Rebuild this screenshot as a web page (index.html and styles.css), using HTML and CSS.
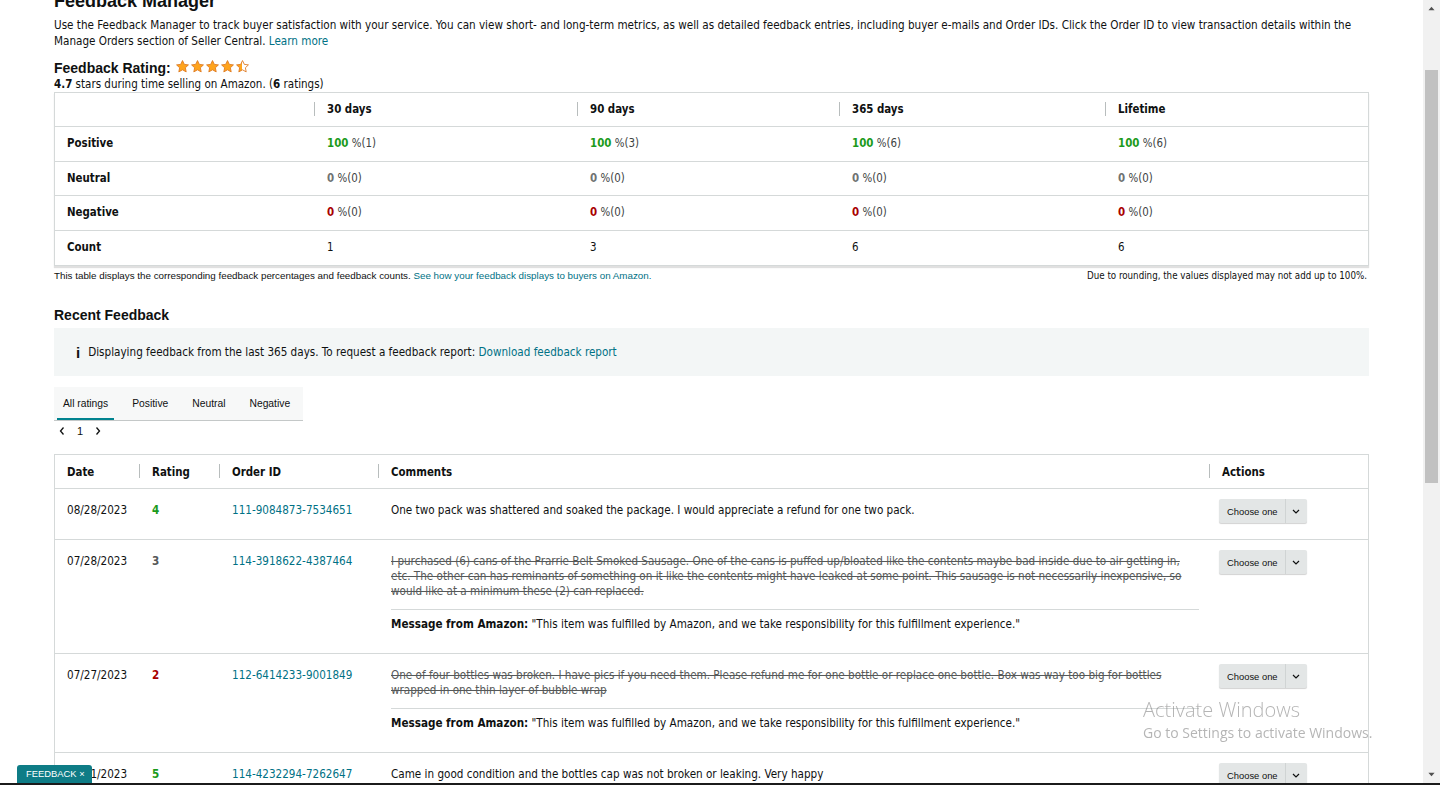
FILE: index.html
```html
<!DOCTYPE html>
<html lang="en">
<head>
<meta charset="utf-8">
<title>Feedback Manager</title>
<link rel="stylesheet" href="styles.css">
</head>
<body>
<div class="screen">
  <div class="viewport">
    <main class="page">
      <h1 class="title">Feedback Manager</h1>
      <p class="intro">Use the Feedback Manager to track buyer satisfaction with your service. You can view short- and long-term metrics, as well as detailed feedback entries, including buyer e-mails and Order IDs. Click the Order ID to view transaction details within the Manage Orders section of Seller Central. <a class="link" href="#">Learn more</a></p>

      <div class="rating-head">
        <h2 class="h2">Feedback Rating:</h2>
        <div class="stars">
          <svg class="star" viewBox="0 0 24 24"><path d="M12 2.5l2.9 6.1 6.6.8-4.9 4.6 1.3 6.6L12 17.3l-5.9 3.3 1.3-6.6-4.9-4.6 6.6-.8z"/></svg>
          <svg class="star" viewBox="0 0 24 24"><path d="M12 2.5l2.9 6.1 6.6.8-4.9 4.6 1.3 6.6L12 17.3l-5.9 3.3 1.3-6.6-4.9-4.6 6.6-.8z"/></svg>
          <svg class="star" viewBox="0 0 24 24"><path d="M12 2.5l2.9 6.1 6.6.8-4.9 4.6 1.3 6.6L12 17.3l-5.9 3.3 1.3-6.6-4.9-4.6 6.6-.8z"/></svg>
          <svg class="star" viewBox="0 0 24 24"><path d="M12 2.5l2.9 6.1 6.6.8-4.9 4.6 1.3 6.6L12 17.3l-5.9 3.3 1.3-6.6-4.9-4.6 6.6-.8z"/></svg>
          <svg class="star half" viewBox="0 0 24 24"><defs><linearGradient id="hg" x1="0" x2="1" y1="0" y2="0"><stop offset="0.5" stop-color="#ffa41c"/><stop offset="0.5" stop-color="#ffffff"/></linearGradient></defs><path fill="url(#hg)" d="M12 2.5l2.9 6.1 6.6.8-4.9 4.6 1.3 6.6L12 17.3l-5.9 3.3 1.3-6.6-4.9-4.6 6.6-.8z"/></svg>
        </div>
      </div>
      <p class="rating-sub"><b>4.7</b> stars during time selling on Amazon. (<b>6</b> ratings)</p>

      <div class="stats">
        <div class="sh"></div>
        <div class="sh sep">30 days</div>
        <div class="sh sep">90 days</div>
        <div class="sh sep">365 days</div>
        <div class="sh sep">Lifetime</div>

        <div class="sc lbl">Positive</div>
        <div class="sc"><b class="pos">100</b> <span class="pct">%(1)</span></div>
        <div class="sc"><b class="pos">100</b> <span class="pct">%(3)</span></div>
        <div class="sc"><b class="pos">100</b> <span class="pct">%(6)</span></div>
        <div class="sc"><b class="pos">100</b> <span class="pct">%(6)</span></div>

        <div class="sc lbl">Neutral</div>
        <div class="sc"><b class="neu">0</b> <span class="pct">%(0)</span></div>
        <div class="sc"><b class="neu">0</b> <span class="pct">%(0)</span></div>
        <div class="sc"><b class="neu">0</b> <span class="pct">%(0)</span></div>
        <div class="sc"><b class="neu">0</b> <span class="pct">%(0)</span></div>

        <div class="sc lbl">Negative</div>
        <div class="sc"><b class="neg">0</b> <span class="pct">%(0)</span></div>
        <div class="sc"><b class="neg">0</b> <span class="pct">%(0)</span></div>
        <div class="sc"><b class="neg">0</b> <span class="pct">%(0)</span></div>
        <div class="sc"><b class="neg">0</b> <span class="pct">%(0)</span></div>

        <div class="sc lbl last">Count</div>
        <div class="sc last">1</div>
        <div class="sc last">3</div>
        <div class="sc last">6</div>
        <div class="sc last">6</div>
      </div>
      <div class="stats-foot">
        <span>This table displays the corresponding feedback percentages and feedback counts. <a class="link" href="#">See how your feedback displays to buyers on Amazon.</a></span>
        <span class="round">Due to rounding, the values displayed may not add up to 100%.</span>
      </div>

      <h2 class="h2 recent">Recent Feedback</h2>
      <div class="info">
        <span class="info-i">i</span>
        <span>Displaying feedback from the last 365 days. To request a feedback report: <a class="link" href="#">Download feedback report</a></span>
      </div>

      <div class="tabs">
        <span class="tab active">All ratings</span>
        <span class="tab">Positive</span>
        <span class="tab">Neutral</span>
        <span class="tab">Negative</span>
      </div>
      <div class="pager">
        <svg class="chev" viewBox="0 0 8 10"><path d="M5.5 1.5L2.5 5l3 3.5"/></svg>
        <span class="pnum">1</span>
        <svg class="chev" viewBox="0 0 8 10"><path d="M2.5 1.5L5.5 5l-3 3.5"/></svg>
      </div>

      <div class="fb">
        <div class="fb-row fb-head">
          <div class="fh">Date</div>
          <div class="fh sep">Rating</div>
          <div class="fh sep">Order ID</div>
          <div class="fh sep">Comments</div>
          <div class="fh sep">Actions</div>
        </div>

        <div class="fb-row">
          <div class="fc">08/28/2023</div>
          <div class="fc"><b class="pos">4</b></div>
          <div class="fc"><a class="link" href="#">111-9084873-7534651</a></div>
          <div class="fc comment">One two pack was shattered and soaked the package. I would appreciate a refund for one two pack.</div>
          <div class="fc act"><div class="select"><span class="select-label">Choose one</span><span class="select-caret"><svg viewBox="0 0 8 5"><path d="M1 1l3 3 3-3"/></svg></span></div></div>
        </div>

        <div class="fb-row">
          <div class="fc">07/28/2023</div>
          <div class="fc"><b class="mid">3</b></div>
          <div class="fc"><a class="link" href="#">114-3918622-4387464</a></div>
          <div class="fc comment">
            <p class="struck">I purchased (6) cans of the Prarrie Belt Smoked Sausage. One of the cans is puffed up/bloated like the contents maybe bad inside due to air getting in, etc. The other can has reminants of something on it like the contents might have leaked at some point. This sausage is not necessarily inexpensive, so would like at a minimum these (2) can replaced.</p>
            <p class="reply"><b>Message from Amazon:</b> "This item was fulfilled by Amazon, and we take responsibility for this fulfillment experience."</p>
          </div>
          <div class="fc act"><div class="select"><span class="select-label">Choose one</span><span class="select-caret"><svg viewBox="0 0 8 5"><path d="M1 1l3 3 3-3"/></svg></span></div></div>
        </div>

        <div class="fb-row">
          <div class="fc">07/27/2023</div>
          <div class="fc"><b class="neg">2</b></div>
          <div class="fc"><a class="link" href="#">112-6414233-9001849</a></div>
          <div class="fc comment">
            <p class="struck">One of four bottles was broken. I have pics if you need them. Please refund me for one bottle or replace one bottle. Box was way too big for bottles wrapped in one thin layer of bubble wrap</p>
            <p class="reply"><b>Message from Amazon:</b> "This item was fulfilled by Amazon, and we take responsibility for this fulfillment experience."</p>
          </div>
          <div class="fc act"><div class="select"><span class="select-label">Choose one</span><span class="select-caret"><svg viewBox="0 0 8 5"><path d="M1 1l3 3 3-3"/></svg></span></div></div>
        </div>

        <div class="fb-row">
          <div class="fc">07/21/2023</div>
          <div class="fc"><b class="pos">5</b></div>
          <div class="fc"><a class="link" href="#">114-4232294-7262647</a></div>
          <div class="fc comment">Came in good condition and the bottles cap was not broken or leaking. Very happy</div>
          <div class="fc act"><div class="select"><span class="select-label">Choose one</span><span class="select-caret"><svg viewBox="0 0 8 5"><path d="M1 1l3 3 3-3"/></svg></span></div></div>
        </div>
      </div>
    </main>

    <div class="scrollbar">
      <div class="sb-btn"><svg viewBox="0 0 8 5"><path d="M4 0.5L7.5 4.5H0.5z"/></svg></div>
      <div class="sb-track"><div class="sb-thumb"></div></div>
      <div class="sb-btn"><svg viewBox="0 0 8 5"><path d="M4 4.5L7.5 0.5H0.5z"/></svg></div>
    </div>
  </div>
  <div class="taskbar-edge"></div>
</div>

<div class="feedback-tab">FEEDBACK ×</div>
<div class="activate">
  <div class="act-1">Activate Windows</div>
  <div class="act-2">Go to Settings to activate Windows.</div>
</div>
</body>
</html>
```

FILE: styles.css
```css
* { box-sizing: border-box; }
html, body { margin: 0; padding: 0; }
body {
  font-family: "DejaVu Sans Condensed", "DejaVu Sans", sans-serif;
  font-size: 11.6px;
  color: #0f1111;
  background: #fff;
  overflow: hidden;
}
.screen { display: flex; flex-direction: column; height: 785px; width: 1440px; }
.viewport { flex: 1; display: flex; overflow: hidden; min-height: 0; }
.taskbar-edge { height: 2px; background: #1b1b1b; }

.page { flex: 1; padding-left: 54px; overflow: hidden; }
.page > * { width: 1315px; }

.link { color: #007185; text-decoration: none; }

.title {
  font-family: "Liberation Sans", Arial, sans-serif;
  font-size: 18px; font-weight: bold; line-height: 22px;
  margin: -10px 0 0; color: #0f1111;
}
.intro { margin: 5px 0 0; line-height: 16px; color: #0f1111; }

.rating-head { display: flex; align-items: center; gap: 4px; margin-top: 10px; height: 18px; }
.h2 {
  font-family: "Liberation Sans", Arial, sans-serif;
  font-size: 14px; font-weight: bold; line-height: 18px; margin: 0; color: #0f1111;
}
.stars { display: flex; gap: 0; margin-top: -3px; }
.star { width: 15px; height: 15px; fill: #ffa41c; stroke: #de7921; stroke-width: 1.4; stroke-linejoin: round; }
.rating-sub { margin: 0; line-height: 14px; font-size: 11.5px; }

.stats {
  margin-top: 1px;
  display: grid;
  grid-template-columns: 259px 263px 262px 266px 1fr;
  border: 1px solid #d5d9d9;
  box-shadow: 0 2px 1px rgba(0,0,0,0.12);
  color: #0f1111;
}
.sh, .sc {
  height: 34.5px; line-height: 33.5px; white-space: nowrap;
  border-bottom: 1px solid #d5d9d9; padding-left: 12px; font-size: 11.4px;
}
.sh { height: 34px; font-weight: bold; position: relative; line-height: 32px; }
.sh.sep { padding-left: 13px; }
.sh.sep::before, .fh.sep::before {
  content: ""; position: absolute; left: 0; top: 9px; height: 14px; width: 1px; background: #b8bdbd;
}
.sc.last { border-bottom: none; }
.lbl { font-weight: bold; }
.sc:not(.lbl) { padding-left: 13px; }
.pos { color: #1b9a1b; }
.neu { color: #6f7373; }
.neg { color: #a80000; }
.mid { color: #565959; }
.pct { color: #3d4242; }

.stats-foot {
  display: flex; justify-content: space-between; margin-top: 4px;
  font-family: "Liberation Sans", Arial, sans-serif; font-size: 9.8px; line-height: 12px; color: #0f1111;
}
.stats-foot .round { font-family: "DejaVu Sans Condensed", "DejaVu Sans", sans-serif; font-size: 9.7px; padding-right: 2px; }

.recent { margin-top: 24px; }
.info {
  margin-top: 4px; height: 48px; background: #f3f6f6;
  display: flex; align-items: center; padding-left: 22px; gap: 8px; font-size: 11.6px;
}
.info-i { font-family: "Liberation Sans", Arial, sans-serif; font-weight: bold; font-size: 15px; color: #0f1111; }

.tabs {
  margin-top: 11px; width: 249px !important; height: 34px; background: #f7f8f8;
  border-bottom: 1px solid #c4c8c8; display: flex; align-items: stretch; padding-left: 3px;
  font-family: "Liberation Sans", Arial, sans-serif; font-size: 10.3px; white-space: nowrap;
}
.tab { display: flex; align-items: center; padding: 2px 6px 0; margin-right: 12px; color: #0f1111; border-bottom: 2px solid transparent; flex: none; }
.tab:last-child { margin-right: 0; }
.tab.active { border-bottom-color: #00838f; }
.pager { display: flex; align-items: center; gap: 8px; height: 17px; margin-top: 1px; padding-left: 4px; font-family: "Liberation Sans", Arial, sans-serif; font-size: 11px; }
.chev { width: 8px; height: 10px; fill: none; stroke: #0f1111; stroke-width: 1.3; }
.pnum { padding: 0 3px; }

.fb { margin-top: 15px; border: 1px solid #d5d9d9; border-bottom: none; }
.fb-row { display: grid; grid-template-columns: 84px 80px 159px 831px 1fr; border-bottom: 1px solid #d5d9d9; }
.fh { position: relative; height: 33px; display: flex; align-items: center; padding-left: 12px; font-weight: bold; font-size: 11.4px; }
.fh.sep { padding-left: 13px; }
.fc { padding: 14px 10px 21px 12px; line-height: 15px; font-size: 11.6px; }
.fc:nth-child(n+2) { padding-left: 13px; }
.comment { padding-right: 10px; }
.struck { margin: 0; color: #565959; text-decoration: line-through; padding-right: 6px; }
.reply { margin: 10px 0 0; padding-top: 7px; border-top: 1px solid #d5d9d9; }
.act { padding-top: 10px; padding-bottom: 10px; padding-left: 10px !important; }
.select {
  display: inline-flex; height: 24px; background: #e3e6e6; border-radius: 2px;
  box-shadow: 0 1px 1px rgba(0,0,0,0.18);
  font-family: "Liberation Sans", Arial, sans-serif; font-size: 9.4px; color: #0f1111;
}
.select-label { display: flex; align-items: center; padding: 0 7px 0 8px; }
.select-caret { width: 22px; display: flex; align-items: center; justify-content: center; border-left: 1px solid #d0d4d4; }
.select-caret svg { width: 8px; height: 5px; fill: none; stroke: #0f1111; stroke-width: 1.2; }

.scrollbar { width: 17px; background: #f1f1f1; display: flex; flex-direction: column; }
.sb-btn { height: 17px; display: flex; align-items: center; justify-content: center; }
.sb-btn svg { width: 7px; height: 5px; fill: #505050; }
.sb-track { flex: 1; padding: 53px 2px 0; }
.sb-thumb { height: 413px; background: #c1c1c1; }

.feedback-tab {
  position: fixed; left: 17px; top: 765px; height: 18px; padding: 0 7px 0 9px;
  background: #0e7c86; color: #fff; border-radius: 3px 3px 0 0;
  font-family: "Liberation Sans", Arial, sans-serif; font-size: 9.4px; line-height: 18px;
}
.activate { position: fixed; left: 1143px; top: 696px; color: rgba(120,120,120,0.55); font-family: "Open Sans", "Noto Sans", sans-serif; pointer-events: none; }
.act-1 { font-size: 20px; line-height: 27px; font-weight: 300; }
.act-2 { font-size: 14px; line-height: 20px; }
```
